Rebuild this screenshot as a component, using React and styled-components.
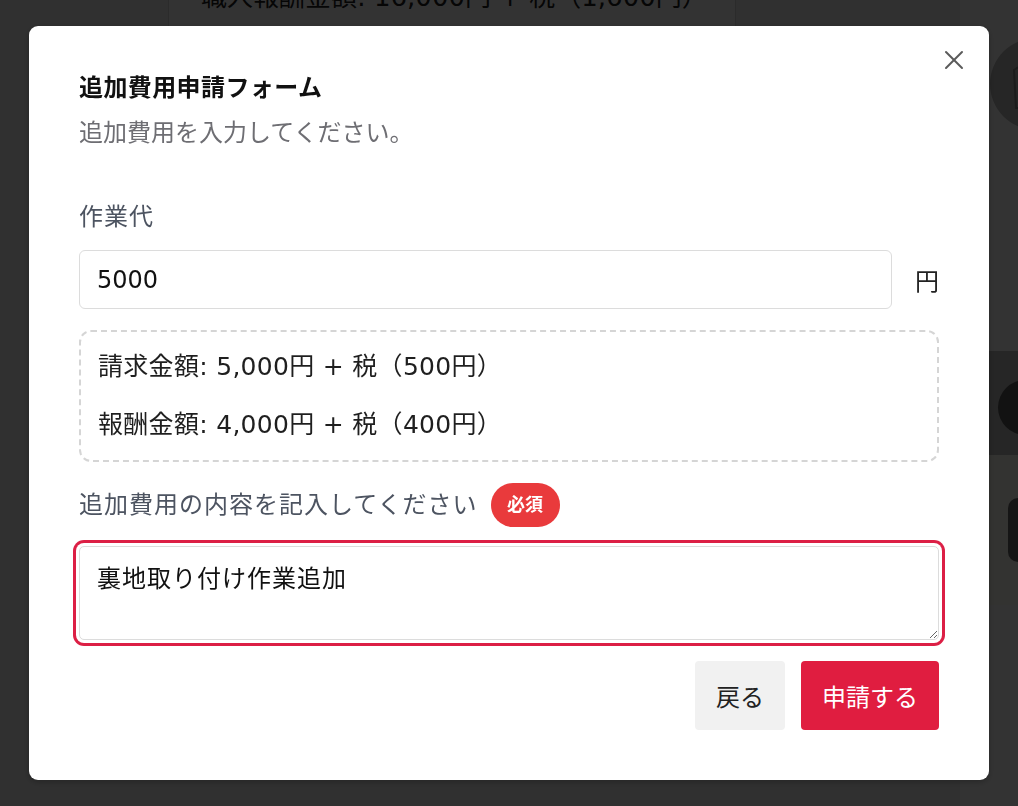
import React, { useEffect, useRef } from 'react';
import styled, { createGlobalStyle } from 'styled-components';

const GlobalStyle = createGlobalStyle`
  html, body {margin: 0; padding: 0; height: 100%; overflow: hidden;}
  body {
    font-family: "DejaVu Sans", "Noto Sans CJK JP", sans-serif;
    background: #efefef;
    text-spacing-trim: space-all;
  }
  * {box-sizing: border-box;}
`;

/* page behind the dialog */
const Page = styled.div`
  display: flex;
  width: 1200px;
  height: 806px;
`;
const Main = styled.main`
  width: 960px;
  padding-left: 168px;
`;
const Card = styled.section`
  width: 568px;
  height: 300px;
  margin-top: -22px;
  background: #fff;
  border: 1px solid #d8d8d8;
  padding: 0 32px;
  font-size: 26px;
  line-height: 36px;
  white-space: nowrap;
  color: #222;
`;
const Sidebar = styled.aside`
  display: flex;
  flex-direction: column;
  width: 240px;
  background: #fff;
`;
const AvatarRow = styled.div`
  height: 351px;
  padding: 38px 0 0 30px;
`;
const Avatar = styled.div`
  width: 92px;
  height: 92px;
  border-radius: 50%;
  background: #bcbcbc;
  display: flex;
  align-items: center;
  justify-content: center;
  svg {width: 60px; height: 60px;}
`;
const ActiveRow = styled.div`
  height: 104px;
  background: #bdbdbd;
  padding: 29px 0 0 38px;
`;
const IconDot = styled.div`
  width: 55px;
  height: 55px;
  border-radius: 50%;
  background: #5a5a5a;
`;
const LowerRow = styled.div`
  height: 150px;
  background: #fffcf4;
  padding: 43px 0 0 48px;
`;
const SideButton = styled.div`
  width: 120px;
  height: 64px;
  border-radius: 10px;
  background: #6a6a6a;
`;

/* dialog */
const Overlay = styled.div`
  position: fixed;
  inset: 0;
  background: rgba(0, 0, 0, 0.8);
  display: flex;
  justify-content: center;
  align-items: flex-start;
  padding-top: 26px;
`;
const Dialog = styled.div`
  position: relative;
  width: 960px;
  background: #fff;
  border-radius: 9px;
  padding: 44px 50px 50px;
  box-shadow: 0 2px 6px rgba(0, 0, 0, 0.25);
  color: #1a1a1a;
`;
const Close = styled.button`
  position: absolute;
  top: 24px;
  right: 25px;
  width: 20px;
  height: 20px;
  padding: 0;
  border: 0;
  background: none;
  cursor: pointer;
  svg {display: block;}
`;
const Title = styled.h2`
  margin: 0;
  font-size: 24px;
  line-height: 36px;
  font-weight: 700;
  letter-spacing: 0.4px;
  color: #111;
`;
const Lead = styled.p`
  margin: 9px 0 0;
  font-size: 24px;
  line-height: 36px;
  color: #6e6e73;
`;
const Label = styled.label`
  display: flex;
  align-items: center;
  gap: 13px;
  margin-top: ${p => p.$top || 0}px;
  font-size: 24px;
  line-height: 36px;
  letter-spacing: 1px;
  color: #4d5461;
`;
const Badge = styled.span`
  display: inline-flex;
  align-items: center;
  justify-content: center;
  width: 69px;
  height: 44px;
  border-radius: 22px;
  background: #e93a3c;
  color: #fff;
  font-size: 18px;
  font-weight: 700;
  letter-spacing: 0;
`;
const AmountRow = styled.div`
  display: flex;
  align-items: center;
  gap: 23px;
  margin-top: 15px;
`;
const Input = styled.input`
  flex: 1;
  height: 59px;
  border: 1.5px solid #dcdcdc;
  border-radius: 6px;
  padding: 0 17px;
  font-family: inherit;
  font-size: 24px;
  color: #111;
  outline: none;
`;
const Unit = styled.span`
  font-size: 24px;
  color: #222;
`;
const Summary = styled.div`
  display: flex;
  flex-direction: column;
  gap: 22px;
  margin-top: 21px;
  padding: 17px;
  border: 2px dashed #d5d5d5;
  border-radius: 12px;
`;
const SummaryLine = styled.p`
  margin: 0;
  font-size: 25px;
  line-height: 36px;
  letter-spacing: 0.3px;
  color: #1f1f1f;
`;
const TextArea = styled.textarea`
  display: block;
  width: 100%;
  height: 94px;
  margin-top: 19px;
  padding: 14px 17px;
  border: 1.5px solid #dcdcdc;
  border-radius: 5px;
  font-family: inherit;
  font-size: 24px;
  line-height: 36px;
  letter-spacing: 1px;
  color: #111;
  caret-color: #111;
  resize: vertical;
  outline: none;
  box-shadow: 0 0 0 3px #fff, 0 0 0 6px #dc1f45;
`;
const Actions = styled.div`
  display: flex;
  justify-content: flex-end;
  gap: 16px;
  margin-top: 21px;
`;
const Button = styled.button`
  height: 69px;
  padding: 0 21px;
  border: 0;
  border-radius: 4px;
  font-family: inherit;
  font-size: 24px;
  background: ${p => (p.$primary ? '#e01d40' : '#f1f1f1')};
  color: ${p => (p.$primary ? '#fff' : '#222')};
  cursor: pointer;
`;

const ShirtIcon = () => (
  <svg viewBox="0 0 60 60" fill="none" stroke="#8a8a8a" strokeWidth="2">
    <path d="M20 8 L30 14 L40 8 L52 16 L50 54 L10 54 L8 16 Z" />
    <path d="M24 10 L30 20 L36 10" />
    <circle cx="30" cy="28" r="1.5" fill="#8a8a8a" />
    <circle cx="30" cy="36" r="1.5" fill="#8a8a8a" />
    <circle cx="30" cy="44" r="1.5" fill="#8a8a8a" />
  </svg>
);

const memo = '裏地取り付け作業追加';

export default function App() {
  const area = useRef(null);

  useEffect(() => {
    const el = area.current;
    if (!el) return;
    el.focus();
    el.setSelectionRange(memo.length, memo.length);
  }, []);

  return (
    <>
      <GlobalStyle />
      <Page>
        <Main>
          <Card>職人報酬金額: 16,000円 + 税（1,600円）</Card>
        </Main>
        <Sidebar>
          <AvatarRow>
            <Avatar><ShirtIcon /></Avatar>
          </AvatarRow>
          <ActiveRow><IconDot /></ActiveRow>
          <LowerRow><SideButton /></LowerRow>
        </Sidebar>
      </Page>

      <Overlay>
        <Dialog role="dialog">
          <Close aria-label="閉じる">
            <svg width="20" height="20" viewBox="0 0 20 20" stroke="#5a5a5a" strokeWidth="2" strokeLinecap="round">
              <line x1="2" y1="2" x2="18" y2="18" />
              <line x1="18" y1="2" x2="2" y2="18" />
            </svg>
          </Close>
          <Title>追加費用申請フォーム</Title>
          <Lead>追加費用を入力してください。</Lead>

          <Label $top={48}>作業代</Label>
          <AmountRow>
            <Input defaultValue="5000" />
            <Unit>円</Unit>
          </AmountRow>

          <Summary>
            <SummaryLine>請求金額: 5,000円 + 税（500円）</SummaryLine>
            <SummaryLine>報酬金額: 4,000円 + 税（400円）</SummaryLine>
          </Summary>

          <Label $top={21}>
            追加費用の内容を記入してください
            <Badge>必須</Badge>
          </Label>
          <TextArea ref={area} defaultValue={memo} />

          <Actions>
            <Button>戻る</Button>
            <Button $primary>申請する</Button>
          </Actions>
        </Dialog>
      </Overlay>
    </>
  );
}
